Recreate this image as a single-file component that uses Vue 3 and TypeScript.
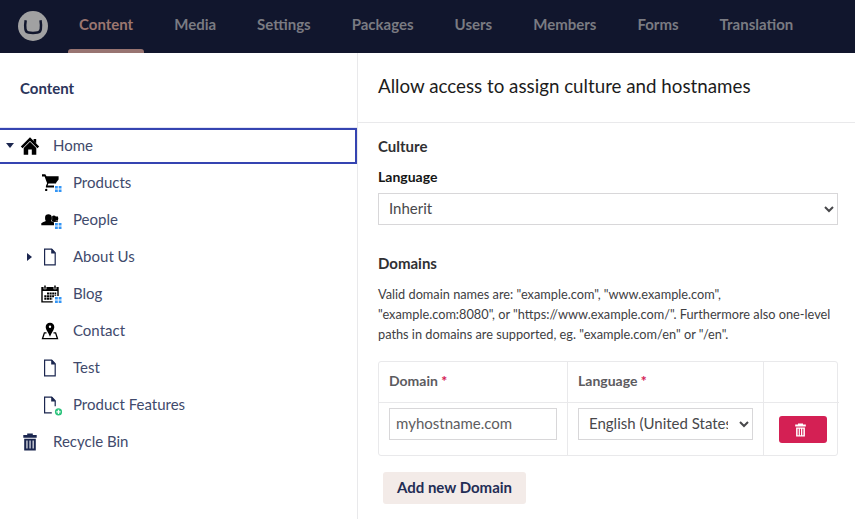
<script setup lang="ts">
import { ref } from 'vue'

type Icon = 'home' | 'cart' | 'people' | 'doc' | 'calendar' | 'pin' | 'trash'
interface TreeItem {
  label: string
  icon: Icon
  child?: boolean
  caret?: 'open' | 'closed'
  badge?: 'grid' | 'add'
  selected?: boolean
}

const sections: string[] = ['Content', 'Media', 'Settings', 'Packages', 'Users', 'Members', 'Forms', 'Translation']
const tree: TreeItem[] = [
  { label: 'Home', icon: 'home', caret: 'open', selected: true },
  { label: 'Products', icon: 'cart', child: true, badge: 'grid' },
  { label: 'People', icon: 'people', child: true, badge: 'grid' },
  { label: 'About Us', icon: 'doc', child: true, caret: 'closed' },
  { label: 'Blog', icon: 'calendar', child: true, badge: 'grid' },
  { label: 'Contact', icon: 'pin', child: true },
  { label: 'Test', icon: 'doc', child: true },
  { label: 'Product Features', icon: 'doc', child: true, badge: 'add' },
  { label: 'Recycle Bin', icon: 'trash' },
]
const domain = ref('myhostname.com')
const culture = ref('Inherit')
const language = ref('English (United States)')
</script>

<template>
  <div class="app">
    <header class="topbar">
      <svg class="logo" viewBox="0 0 30 30">
        <circle cx="15" cy="15" r="15" fill="#a1a1a2" />
        <path d="M7.7 9.2Q6.9 13.5 7.4 18Q7.8 21.1 10.4 21.5Q15 22.3 19.6 21.5Q22.4 21.1 22.8 18Q23.3 13.5 22.5 9.2" fill="none" stroke="#11162d" stroke-width="2.5" />
      </svg>
      <nav class="sections">
        <a v-for="(s, i) in sections" :key="s" class="section" :class="{ active: i === 0 }">{{ s }}</a>
      </nav>
    </header>
    <div class="body">
      <aside class="sidebar">
        <h5 class="tree-title">Content</h5>
        <ul class="tree">
          <li v-for="item in tree" :key="item.label" class="row" :class="{ child: item.child, selected: item.selected }">
            <span class="caret">
              <svg v-if="item.caret === 'open'" width="8" height="5" viewBox="0 0 8 5"><path d="M0 0h8L4 5z" fill="#1b264f" /></svg>
              <svg v-if="item.caret === 'closed'" class="closed" width="5" height="8" viewBox="0 0 5 8"><path d="M0 0v8l5-4z" fill="#1b264f" /></svg>
            </span>
            <svg class="icon" viewBox="0 0 22 22">
              <g v-if="item.icon === 'home'">
                <path d="M1.7 12.3 10 4l8.3 8.3" fill="none" stroke="#000" stroke-width="2.5" />
                <path d="M13.6 4h2.6v4.4l-2.6-2.2z" />
                <path d="M3.7 13 10 6.8l6.3 6.2v6.7h-4.5v-5.3H8.2v5.3H3.7z" />
              </g>
              <g v-if="item.icon === 'cart'">
                <path d="M2 2.3h3.3l1.2 2h12.1v3.2l-2.2 2.8-.4 1.2H8.4l-.8 2h7.2v2H5.9v-1.6l1.2-2.6-2.5-6.9H2z" />
                <circle cx="6.2" cy="17.9" r="1.2" />
              </g>
              <g v-if="item.icon === 'people'">
                <ellipse cx="13.9" cy="9.7" rx="2.4" ry="3.1" />
                <ellipse cx="17" cy="9.6" rx="1.3" ry="2.4" />
                <path d="M12 12.2h5.8v3.2H12z" />
                <path d="M1.3 16.3v-2.1c.5-1 3.6-1.5 4.6-2.3-.9-.8-.8-2.1-.8-3.6 0-2 1.3-3 3.3-3s3.4 1 3.4 3c0 1.5.1 2.8-.8 3.6 1 .8 3 1.3 3.5 2.3v2.1z" stroke="#fff" stroke-width=".5" paint-order="stroke" />
              </g>
              <g v-if="item.icon === 'doc'">
                <path :d="item.badge ? 'M11.8 18.8H4.6V3.1h7.1l3.5 3.7v5.4' : 'M4.6 3.1h7.1l3.5 3.7v12H4.6z'" fill="none" stroke="#1b264f" stroke-width="1.2" />
                <path d="M11.2 3v4.4h4.3L12.1 3z" fill="#1b264f" />
              </g>
              <g v-if="item.icon === 'calendar'">
                <path fill-rule="evenodd" d="M1.3 4h17.4v10h-1.4V8H2.7v10.2h10v1.4H1.3z" />
                <path d="M5 2.6v3.6M15 2.6v3.6" stroke="#fff" stroke-width="2.8" />
                <path d="M5 2.6v3.2M15 2.6v3.2" stroke="#000" stroke-width="1.5" />
                <path d="M7 10.6h9.2M4.3 13.2h11.9M4.3 15.8h8" stroke="#000" stroke-width="2" stroke-dasharray="2.1 .5" />
              </g>
              <g v-if="item.icon === 'pin'">
                <path fill-rule="evenodd" d="M10 2.7c2.6 0 4.3 1.8 4.3 4.2 0 2.9-2.7 5.3-4.3 9.8-1.6-4.5-4.3-6.9-4.3-9.8 0-2.4 1.7-4.2 4.3-4.2zm0 2.9a1.2 1.2 0 1 0 0 2.4 1.2 1.2 0 0 0 0-2.4z" />
                <path d="M6.5 12.8H4.4L2.5 18.7h15l-1.9-5.9h-2.1" fill="none" stroke="#000" stroke-width="1.3" />
              </g>
              <g v-if="item.icon === 'trash'" fill="#1b264f">
                <path d="M7.2 4V2.6h5.6V4h3.9v2.7H3.3V4z" />
                <path fill-rule="evenodd" d="M4.2 7.8h11.6v11.7H4.2zM6.4 9.6v7.8h1.1V9.6zm3.1 0v7.8h1.1V9.6zm3.1 0v7.8h1.1V9.6z" />
              </g>
              <g v-if="item.badge === 'grid'" fill="#3395f5">
                <path d="M14 13h8v8h-8z" fill="#fff" />
                <path d="M15 14h2.8v2.6H15zM18.7 14h2.8v2.6h-2.8zM15 17.4h2.8V20H15zM18.7 17.4h2.8V20h-2.8z" />
              </g>
              <g v-if="item.badge === 'add'">
                <circle cx="18.5" cy="17.8" r="3.6" fill="#2bc37c" />
                <path d="M16.4 17.8h4.2M18.5 15.7v4.2" stroke="#fff" stroke-width="1.3" />
              </g>
            </svg>
            <span class="label">{{ item.label }}</span>
          </li>
        </ul>
      </aside>
      <main class="panel">
        <h1 class="panel-title">Allow access to assign culture and hostnames</h1>
        <div class="content">
          <h5 class="group">Culture</h5>
          <label class="field">Language</label>
          <select v-model="culture" class="control wide"><option>Inherit</option></select>
          <h5 class="group domains">Domains</h5>
          <p class="help">Valid domain names are: "example.com", "www.example.com",<br>"example.com:8080", or "https://www.example.com/". Furthermore also one-level<br>paths in domains are supported, eg. "example.com/en" or "/en".</p>
          <div class="table">
            <div class="cell head">Domain <b>*</b></div>
            <div class="cell head">Language <b>*</b></div>
            <div class="cell head"></div>
            <div class="cell"><input v-model="domain" class="control" type="text"></div>
            <div class="cell"><select v-model="language" class="control"><option>English (United States)</option></select></div>
            <div class="cell action">
              <button class="remove" aria-label="Remove">
                <svg width="11" height="14" viewBox="0 0 11 14" fill="#fff">
                  <path d="M3 1.6V.4h5v1.2h2.8v2H.2v-2z" />
                  <path fill-rule="evenodd" d="M1.1 4.5h8.8v9H1.1zM2.6 5.7v6.5h1.1V5.7zm2.3 0v6.5H6V5.7zm2.4 0v6.5h1.1V5.7z" />
                </svg>
              </button>
            </div>
          </div>
          <button class="add">Add new Domain</button>
        </div>
      </main>
    </div>
  </div>
</template>

<style>
body { margin: 0; background: #fff; overflow: hidden; }
</style>

<style scoped>
.app { width: 855px; height: 519px; overflow: hidden; display: flex; flex-direction: column; font-family: Lato, "Liberation Sans", sans-serif; font-size: 15px; color: #404043; }
.app * { box-sizing: border-box; }
.topbar { height: 53px; flex: none; background: #11162d; display: flex; padding-left: 18px; }
.logo { width: 30px; height: 30px; margin-top: 11px; flex: none; }
.sections { display: flex; margin-left: 10.5px; }
.section { position: relative; padding: 0 20.5px; line-height: 48px; font-weight: 700; color: #7a7b82; white-space: nowrap; }
.section.active { color: #9c7670; }
.section.active::after { content: ""; position: absolute; left: 9.5px; right: 9.5px; bottom: 0; height: 4px; border-radius: 3px 3px 0 0; background: #987471; }
.body { display: flex; flex: 1; min-height: 0; }
.sidebar { width: 358px; border-right: 1px solid #e9e9eb; flex: none; }
.tree-title { margin: 0; height: 74px; padding-left: 20px; line-height: 71px; font-size: 15px; font-weight: 700; color: #2b355b; }
.tree { list-style: none; margin: 0; padding: 0; }
.row { height: 37px; display: flex; align-items: flex-start; color: #1b264f; }
.row.selected { box-shadow: inset 0 1px #e3e5f5, inset 0 3px #3544b1, inset -2px 0 #3544b1, inset 0 -2px #3544b1; }
.caret { width: 20px; height: 37px; flex: none; padding-left: 6px; display: flex; align-items: center; }
.caret .closed { margin-left: 1px; }
.row.child { padding-left: 20px; }
.icon { width: 22px; height: 22px; margin-top: 8px; flex: none; }
.label { margin-left: 11px; line-height: 37px; color: #414a6c; }
.panel { flex: 1; min-width: 0; }
.panel-title { margin: 0; height: 70px; border-bottom: 1px solid #e9e9eb; padding-left: 20px; line-height: 66px; font-size: 18.75px; font-weight: 400; color: #1c1c1c; }
.content { padding: 13px 17px 0 20px; }
.group { margin: 0; line-height: 20px; font-size: 15px; font-weight: 700; color: #303033; }
.field { display: block; margin-top: 11px; line-height: 20px; font-size: 14px; font-weight: 700; color: #151515; }
.control { display: block; width: 100%; height: 32px; border: 1px solid #d8d7d9; border-radius: 0; background: #fff; color: #5e5d61; font: 400 15px Lato, sans-serif; padding: 3px 6px 5px; outline: none; }
input.control { padding: 2px 6px 4px; }
select.control { color: #48484b; }
.wide { margin-top: 6px; }
.domains { margin-top: 28px; }
.help { margin: 11px 0 0; font-size: 12.75px; line-height: 20px; white-space: nowrap; }
.table { margin-top: 17px; height: 95px; display: grid; grid-template-columns: 189px 196px 75px; grid-template-rows: 41px 52px; border: 1px solid #e9e9eb; border-radius: 3px; }
.cell { padding: 5px 10px; border-right: 1px solid #e9e9eb; }
.cell:nth-child(3n) { border-right: 0; }
.head { padding-top: 0; border-bottom: 1px solid #e9e9eb; line-height: 38px; font-size: 14px; font-weight: 700; color: #5c5b5f; }
.head b { color: #d42054; }
.action { padding: 13px 10px 0 15px; }
.cell input.control { padding: 2px 6px 5px; }
.cell select.control { padding-right: 8px; }
.remove { width: 48px; height: 27px; padding: 0 0 0 16px; border: 0; border-radius: 3px; background: #d42054; display: flex; align-items: center; }
.add { display: block; margin: 16px 0 0 5px; width: 143px; height: 32px; border: 0; border-radius: 3px; background: #f3ebe8; color: #232d55; padding: 0 0 3px; font: 700 15px Lato, sans-serif; }
</style>
